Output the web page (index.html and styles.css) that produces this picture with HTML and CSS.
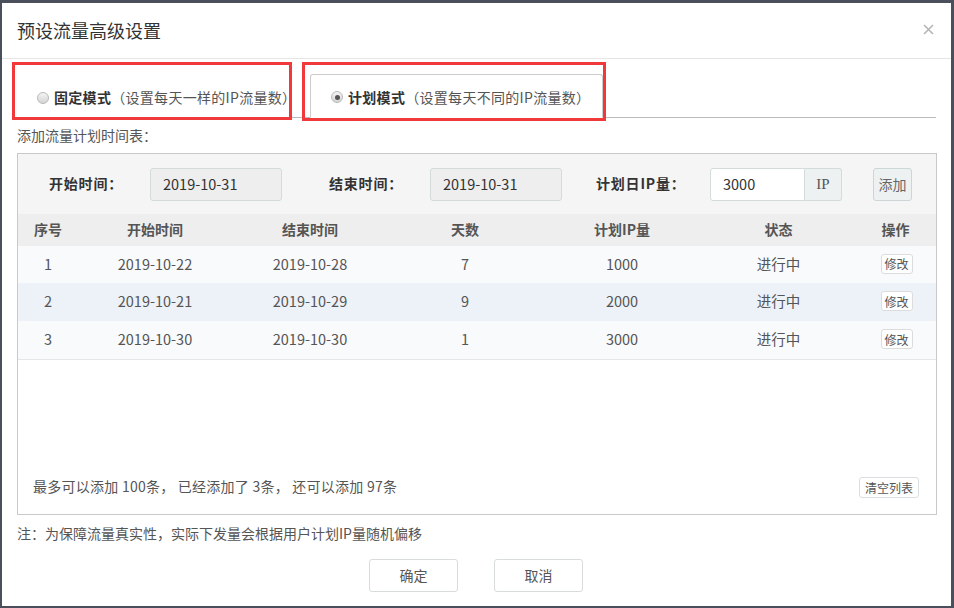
FILE: index.html
```html
<!DOCTYPE html>
<html lang="zh">
<head>
<meta charset="utf-8">
<title>预设流量高级设置</title>
<link rel="stylesheet" href="styles.css">
</head>
<body>
<div class="dialog">
  <div class="dlg-header">
    <h1 class="dlg-title">预设流量高级设置</h1>
    <span class="dlg-close"><svg width="11" height="11" viewBox="0 0 11 11"><path d="M1 1L10 10M10 1L1 10" stroke="#b5b5b5" stroke-width="1.6" fill="none"/></svg></span>
  </div>
  <div class="dlg-body">
    <div class="tabs">
      <div class="tab">
        <span class="radio"></span>
        <span class="tab-name">固定模式</span><span class="tab-desc">（设置每天一样的IP流量数）</span>
      </div>
      <div class="tab tab-active">
        <span class="radio radio-on"></span>
        <span class="tab-name">计划模式</span><span class="tab-desc">（设置每天不同的IP流量数）</span>
      </div>
      <span class="mark mark-1"></span>
      <span class="mark mark-2"></span>
    </div>
    <div class="section-title">添加流量计划时间表：</div>
    <div class="panel">
      <div class="form-row">
        <span class="f-label f-label-1">开始时间：</span>
        <span class="f-input f-date">2019-10-31</span>
        <span class="f-label f-label-2">结束时间：</span>
        <span class="f-input f-date">2019-10-31</span>
        <span class="f-label f-label-3">计划日IP量：</span>
        <span class="f-group"><span class="f-input f-ip">3000</span><span class="f-addon">IP</span></span>
        <span class="btn-add">添加</span>
      </div>
      <table class="plan-table">
        <colgroup>
          <col class="c1"><col class="c2"><col class="c3"><col class="c4"><col class="c5"><col class="c6"><col class="c7">
        </colgroup>
        <thead>
          <tr><th>序号</th><th>开始时间</th><th>结束时间</th><th>天数</th><th>计划IP量</th><th>状态</th><th>操作</th></tr>
        </thead>
        <tbody>
          <tr class="r1"><td>1</td><td>2019-10-22</td><td>2019-10-28</td><td>7</td><td>1000</td><td>进行中</td><td><span class="btn-mini">修改</span></td></tr>
          <tr class="r2"><td>2</td><td>2019-10-21</td><td>2019-10-29</td><td>9</td><td>2000</td><td>进行中</td><td><span class="btn-mini">修改</span></td></tr>
          <tr class="r3"><td>3</td><td>2019-10-30</td><td>2019-10-30</td><td>1</td><td>3000</td><td>进行中</td><td><span class="btn-mini">修改</span></td></tr>
        </tbody>
      </table>
      <div class="panel-fill"></div>
      <div class="panel-foot">
        <span class="foot-text">最多可以添加 100条， 已经添加了 3条， 还可以添加 97条</span>
        <span class="btn-clear">清空列表</span>
      </div>
    </div>
    <div class="note">注：为保障流量真实性，实际下发量会根据用户计划IP量随机偏移</div>
    <div class="actions">
      <span class="btn">确定</span>
      <span class="btn">取消</span>
    </div>
  </div>
</div>
</body>
</html>
```
FILE: styles.css
```css
* { box-sizing: border-box; }
html, body { margin: 0; padding: 0; }
body {
  background: #4b4e5b;
  width: 954px;
  height: 608px;
  padding: 3px 3px 2px 2px;
  font-family: "Noto Sans CJK SC", "Noto Sans", sans-serif;
  font-size: 14px;
  color: #333;
}
.dialog {
  width: 949px;
  height: 603px;
  background: #fff;
  display: flex;
  flex-direction: column;
}
.dlg-header {
  height: 56px;
  border-bottom: 1px solid #e5e5e5;
  display: flex;
  align-items: center;
  justify-content: space-between;
  padding: 0 17px 0 15px;
}
.dlg-title {
  margin: 0;
  font-size: 18px;
  font-weight: normal;
  color: #333;
  line-height: 24px;
  padding-bottom: 1px;
}
.dlg-close { display: flex; margin-top: -3px; }
.dlg-body {
  padding: 0 15px 0 14px;
  display: flex;
  flex-direction: column;
}
.tabs {
  position: relative;
  height: 59px;
  padding-top: 15px;
  border-bottom: 1px solid #bbb;
  display: flex;
  align-items: stretch;
}
.tab {
  width: 294px;
  height: 44px;
  padding-left: 21px;
  display: flex;
  align-items: center;
  line-height: 20px;
  font-size: 14px;
  padding-top: 2px;
}
.tab-active {
  width: 293px;
  border: 1px solid #ccc;
  border-bottom-color: #fff;
  border-radius: 3px 3px 0 0;
  background: #fff;
  padding-left: 20px;
  padding-top: 1px;
}
.radio {
  width: 12px;
  height: 12px;
  border-radius: 50%;
  border: 1px solid #b9b9b9;
  background: linear-gradient(#f4f4f4, #d4d4d4);
  margin-right: 5px;
  margin-top: 1px;
  display: inline-flex;
  align-items: center;
  justify-content: center;
}
.radio-on::after {
  content: "";
  width: 5px;
  height: 5px;
  border-radius: 50%;
  background: #555;
}
.tab-name { font-weight: bold; color: #333; letter-spacing: 0.3px; }
.tab-desc { color: #555; letter-spacing: 0.3px; }
.mark {
  position: absolute;
  border: 3px solid #f0393b;
  pointer-events: none;
}
.mark-1 { left: -4px; top: 3px; width: 280px; height: 58px; }
.mark-2 { left: 286px; top: 3px; width: 304px; height: 59px; }
.section-title {
  font-size: 14px;
  color: #555;
  line-height: 20px;
  padding: 7px 0 8px 1px;
}
.panel {
  height: 362px;
  margin: 0 0 0 1px;
  width: 920px;
  border: 1px solid #c9c9c9;
  display: flex;
  flex-direction: column;
}
.form-row {
  height: 60px;
  background: #f5f5f5;
  display: flex;
  align-items: center;
  padding-left: 31px;
}
.f-label {
  font-weight: bold;
  color: #333;
  font-size: 14px;
  letter-spacing: 0.8px;
  padding-bottom: 2px;
}
.f-label-1 { width: 101px; }
.f-label-2 { width: 101px; margin-left: 47px; }
.f-label-3 { width: 114px; margin-left: 34px; }
.f-input {
  height: 33px;
  display: flex;
  align-items: center;
  padding-left: 12px;
  padding-bottom: 1px;
  font-size: 14.5px;
  color: #333;
  border: 1px solid #d3dbdb;
  border-radius: 3px;
}
.f-date { width: 132px; background: #eeeeee; }
.f-group { display: flex; }
.f-ip { width: 95px; background: #fff; border-radius: 3px 0 0 3px; }
.f-addon {
  width: 37px;
  height: 33px;
  border: 1px solid #d3dbdb;
  border-left: none;
  border-radius: 0 3px 3px 0;
  background: #eef1f1;
  display: flex;
  align-items: center;
  justify-content: center;
  font-family: "Liberation Serif", serif;
  font-size: 15px;
  color: #555;
}
.btn-add {
  margin-left: 31px;
  width: 39px;
  height: 33px;
  border: 1px solid #cdd6d6;
  border-radius: 3px;
  background: #eef1f1;
  color: #666;
  display: flex;
  align-items: center;
  justify-content: center;
  font-size: 14px;
  padding-bottom: 1px;
}
.plan-table {
  width: 918px;
  border-collapse: collapse;
  table-layout: fixed;
}
.c1 { width: 60px; }
.c2 { width: 154px; }
.c3 { width: 156px; }
.c4 { width: 154px; }
.c5 { width: 160px; }
.c6 { width: 153px; }
.c7 { width: 81px; }
.plan-table th {
  height: 32px;
  background: #eeeeee;
  font-weight: bold;
  color: #555;
  font-size: 14px;
  padding: 0 0 3px;
}
.plan-table td {
  text-align: center;
  color: #555;
  font-size: 14.5px;
  padding: 0 0 3px;
}
.r1 td { height: 37px; background: #f9fafc; }
.r2 td { height: 38px; background: #edf1f8; }
.r3 td { height: 38px; background: #f9fafc; border-bottom: 1px solid #e6e6e6; }
.btn-mini {
  display: inline-flex;
  align-items: center;
  justify-content: center;
  width: 32px;
  height: 20px;
  border: 1px solid #dcdcdc;
  border-radius: 3px;
  background: #fff;
  font-size: 12px;
  color: #555;
  margin-left: 2px;
  margin-top: 1px;
}
.panel-fill { flex: 1; }
.panel-foot {
  display: flex;
  align-items: center;
  justify-content: space-between;
  padding: 0 17px 16px 15px;
}
.foot-text { font-size: 14px; color: #555; padding-bottom: 2px; letter-spacing: 0.25px; }
.btn-clear {
  width: 60px;
  height: 21px;
  border: 1px solid #d9dfe0;
  border-radius: 3px;
  font-size: 12px;
  color: #555;
  display: flex;
  align-items: center;
  justify-content: center;
}
.note {
  font-size: 14px;
  color: #555;
  line-height: 20px;
  margin-top: 8px;
  padding-left: 1px;
}
.actions {
  display: flex;
  justify-content: center;
  gap: 36px;
  margin-top: 16px;
}
.btn {
  width: 89px;
  height: 33px;
  border: 1px solid #d8dcdc;
  border-radius: 3px;
  display: flex;
  align-items: center;
  justify-content: center;
  font-size: 14px;
  color: #555;
  background: #fff;
  padding-bottom: 1px;
}
```
